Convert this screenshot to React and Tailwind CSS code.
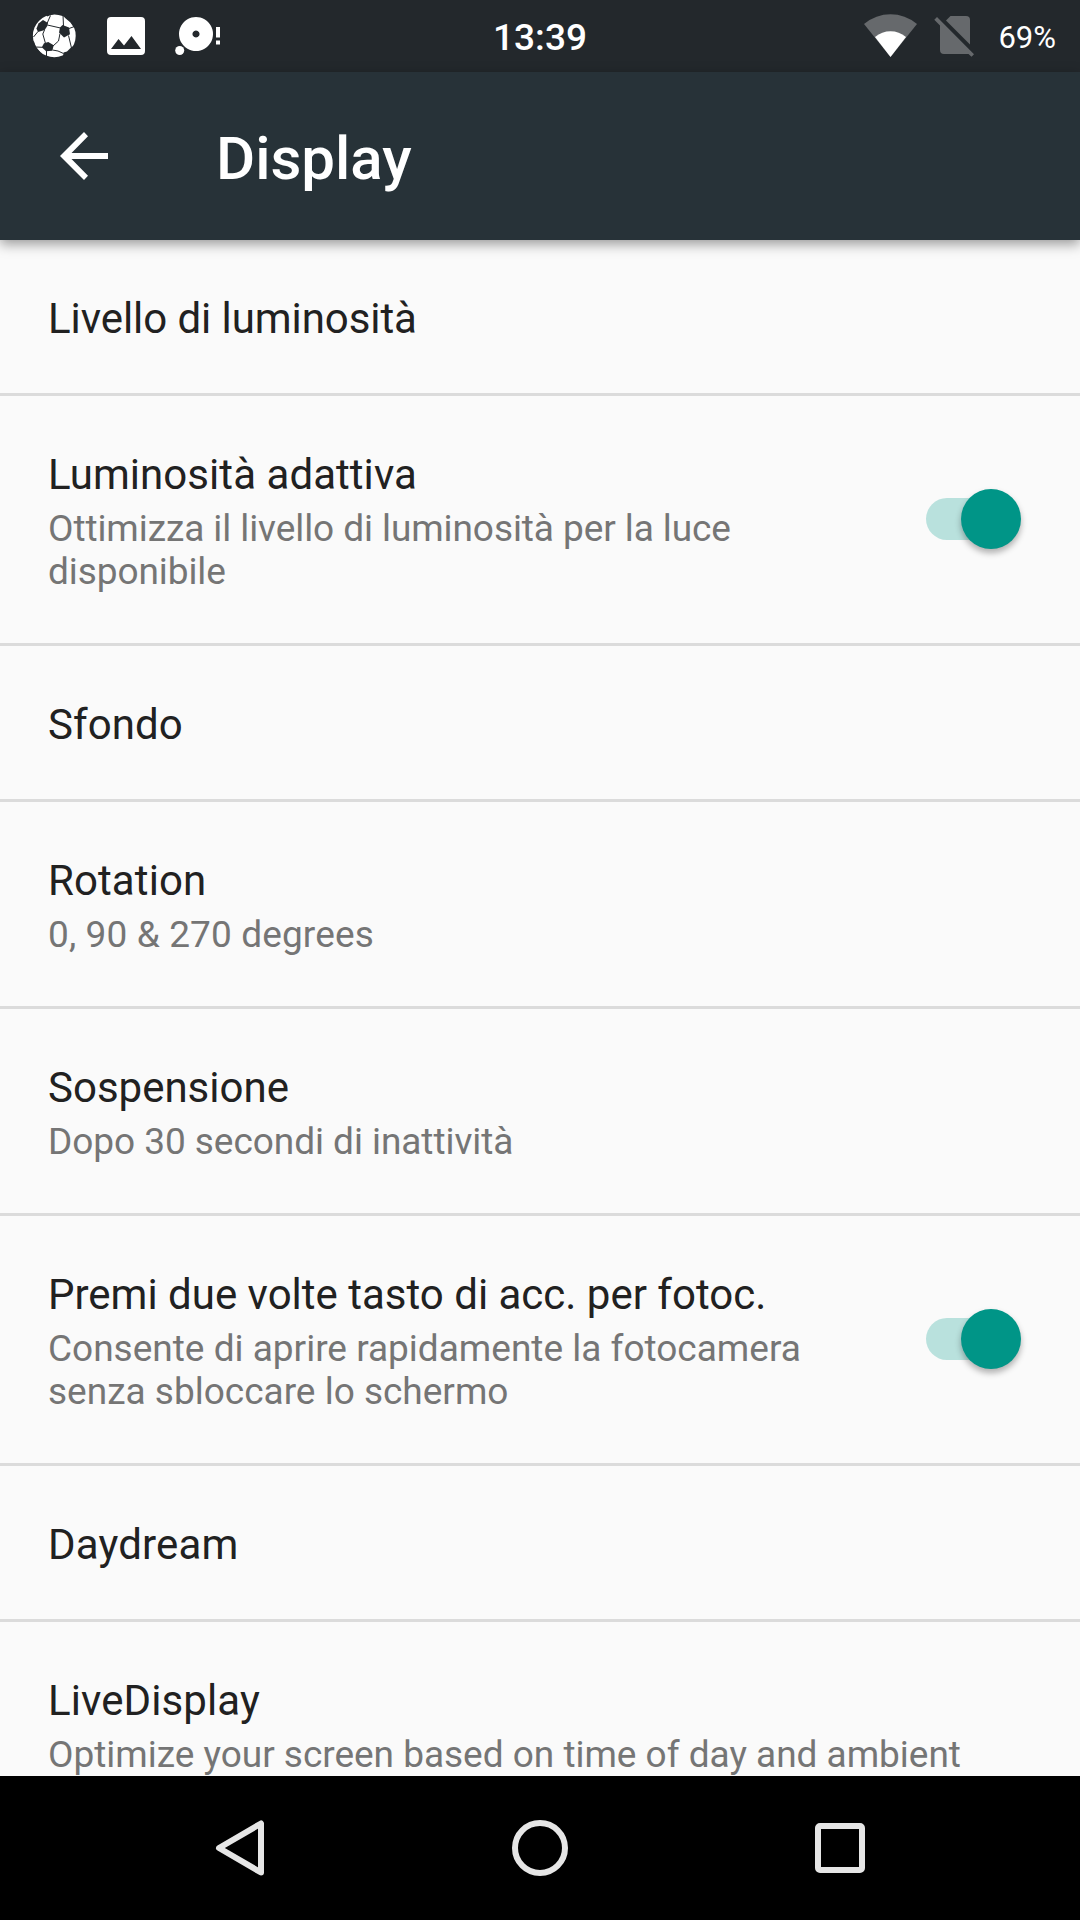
import React from 'react';

const items = [
  { title: 'Livello di luminosità', titleClass: 'tracking-[-0.07px]' },
  { title: 'Luminosità adattiva', titleClass: 'tracking-[0.05px]', summary: ['Ottimizza il livello di luminosità per la luce', 'disponibile'], summaryClass: 'tracking-[-0.08px]', toggle: true },
  { title: 'Sfondo', titleClass: 'tracking-[0.1px]' },
  { title: 'Rotation', titleClass: 'tracking-[0.1px]', summary: ['0, 90 & 270 degrees'], summaryClass: 'tracking-[0.12px]' },
  { title: 'Sospensione', summary: ['Dopo 30 secondi di inattività'], summaryClass: 'tracking-[-0.05px]' },
  { title: 'Premi due volte tasto di acc. per fotoc.', summary: ['Consente di aprire rapidamente la fotocamera', 'senza sbloccare lo schermo'], toggle: true },
  { title: 'Daydream', titleClass: 'tracking-[0.15px]' },
  { title: 'LiveDisplay', titleClass: 'tracking-[0.1px]', summary: ['Optimize your screen based on time of day and ambient'], summaryClass: 'tracking-[-0.02px]' },
];

const SoccerIcon = () => (
  <svg className="w-[44px] h-[44px]" viewBox="0 0 44 44">
    <circle cx="22.300" cy="21.800" r="21.400" fill="#fff" />
    <g fill="#23282c">
      <path d="M6.500 9.500L11 6L16 9L15.300 12L12.700 16L6 18L4.500 14.500Z" />
      <path d="M30.500 11L37 13.500L38 20.300L32 23.500L27 18.500L28 13.500Z" />
      <path d="M12 29.300L16.300 28L21.700 31.300L20.300 36.800L14 37.300L9.800 33.300Z" />
      <path d="M34 2L39 6L44 15L41.500 13L38.500 8.500L32.500 3.500Z" />
      <path d="M0 27L2 27.500L4 33L9 39L4 36Z" />
      <path d="M39 33.500L43 31L38 39L31 43L31.500 38.500L35 37.500Z" />
      <path d="M14 0L22 0L17.500 1.500L15 2.500Z" />
    </g>
    <g stroke="#23282c" strokeWidth="1" fill="none">
      <path d="M15 9.500L18.500 1.500M15.300 11L28.500 14M31.500 12L31 1M37 14.500L42.500 12.500M12.500 16L10.800 20L13.500 29.500M28 19.500L26.500 27L21 32M6 17.500L1.500 23M36.500 21.500L39.500 34M20.500 36L26 37L31.500 39.500M14.500 37L14.500 42M10.500 33.300L3.500 33" />
    </g>
  </svg>
);

const PictureIcon = () => (
  <svg className="w-[38px] h-[38px]" viewBox="0 0 38 38">
    <path fill="#fff" fillRule="evenodd" d="M4 0H34Q38 0 38 4V34Q38 38 34 38H4Q0 38 0 34V4Q0 0 4 0ZM4 32H34L24.500 19L17 28.500L11.500 22Z" />
  </svg>
);

const DiscIcon = () => (
  <svg className="w-[46px] h-[40px]" viewBox="0 0 46 40" fill="#fff">
    <path fillRule="evenodd" d="M21 1a17 17 0 1 0 0.010 0ZM21 14.500a3.500 3.500 0 1 1-0.010 0Z" />
    <circle cx="4.700" cy="34.500" r="4.500" />
    <path d="M41 11h4v10.500h-4zM41 24.500h4v4h-4z" />
  </svg>
);

const WifiIcon = () => (
  <svg className="w-[54px] h-[44px]" viewBox="0 0 54 44">
    <path fill="#66696c" d="M0 10Q12 0.300 26.500 0.300T53 10L26.500 43Z" />
    <path fill="#fff" d="M11 23Q18 17.300 26.500 17.300T42 23L26.500 43Z" />
  </svg>
);

const NoSimIcon = () => (
  <svg className="w-[40px] h-[43px]" viewBox="0 0 40 43" fill="#66696c">
    <path d="M16.500 1H32Q36 1 36 5V29.500L12 5.500Z" />
    <path d="M3 2L40 39.300L37.500 41.800L34.500 39H10Q6 39 6 35V10.500L0.300 4.700Z" />
  </svg>
);

const StatusBar = () => (
  <div className="h-[72px] shrink-0 bg-[#23282c] text-white grid grid-cols-3 items-center">
    <div className="flex items-center pl-8">
      <SoccerIcon />
      <div className="ml-[31px]"><PictureIcon /></div>
      <div className="ml-[30px]"><DiscIcon /></div>
    </div>
    <div className="text-center text-[37px] leading-none font-medium pt-0.5">13:39</div>
    <div className="flex items-center justify-end pr-6">
      <WifiIcon />
      <div className="ml-4"><NoSimIcon /></div>
      <div className="ml-6 text-[31px] leading-none pt-0.5">69%</div>
    </div>
  </div>
);

const Header = () => (
  <header className="relative z-10 h-[168px] shrink-0 bg-[#273238] flex items-center pl-[60px] shadow-[0_4px_12px_rgba(0,0,0,0.4)]">
    <svg className="w-12 h-12" viewBox="0 0 48 48">
      <path d="M48 21v6H11.500L28 43.700L24 48L0 24L24 0L28 4.300L11.500 21z" fill="#fff" />
    </svg>
    <h1 className="ml-[108px] pt-[5px] text-[60px] leading-none font-medium text-white">Display</h1>
  </header>
);

const Toggle = () => (
  <div className="relative w-[96px] h-[60px] shrink-0 mb-[5px]">
    <div className="absolute left-0 top-[9px] w-[80px] h-[42px] rounded-full bg-[#b9e1dd]"></div>
    <div className="absolute right-px top-0 w-[60px] h-[60px] rounded-full bg-[#009587] shadow-[0_4px_6px_rgba(0,0,0,0.3)]"></div>
  </div>
);

const Row = ({ item }) => (
  <li className="flex shrink-0 items-center justify-between pl-12 pr-[58px] pt-[54px] pb-[50px] border-b-3 border-[#dbdbdb]">
    <div>
      <div className={`text-[42px] leading-[49px] text-[#212121] whitespace-nowrap ${item.titleClass || ''}`}>{item.title}</div>
      {item.summary && (
        <div className={`pt-2 text-[37px] leading-[43px] text-[#757575] whitespace-nowrap ${item.summaryClass || ''}`}>
          {item.summary.map((line) => <div key={line}>{line}</div>)}
        </div>
      )}
    </div>
    {item.toggle && <Toggle />}
  </li>
);

const NavBar = () => (
  <nav className="h-36 shrink-0 bg-black flex items-center justify-center gap-[240px]">
    <svg className="w-[60px] h-[60px]" viewBox="0 0 60 60" fill="none" stroke="#e6e6e6" strokeWidth="6" strokeLinejoin="round">
      <path d="M51 5.500V54.500L9 30Z" />
    </svg>
    <svg className="w-[60px] h-[60px]" viewBox="0 0 60 60" fill="none" stroke="#e6e6e6" strokeWidth="6">
      <circle cx="30" cy="30" r="25" />
    </svg>
    <svg className="w-[60px] h-[60px]" viewBox="0 0 60 60" fill="none" stroke="#e6e6e6" strokeWidth="6">
      <rect x="8" y="8" width="44" height="44" rx="2" />
    </svg>
  </nav>
);

const App = () => {
  return (
    <div className="w-[1080px] h-[1920px] flex flex-col overflow-hidden bg-[#fafafa] font-['Roboto',sans-serif]">
      <StatusBar />
      <Header />
      <ul className="flex-1 min-h-0 overflow-hidden flex flex-col">
        {items.map((item) => <Row key={item.title} item={item} />)}
      </ul>
      <NavBar />
    </div>
  );
};

export default App;
